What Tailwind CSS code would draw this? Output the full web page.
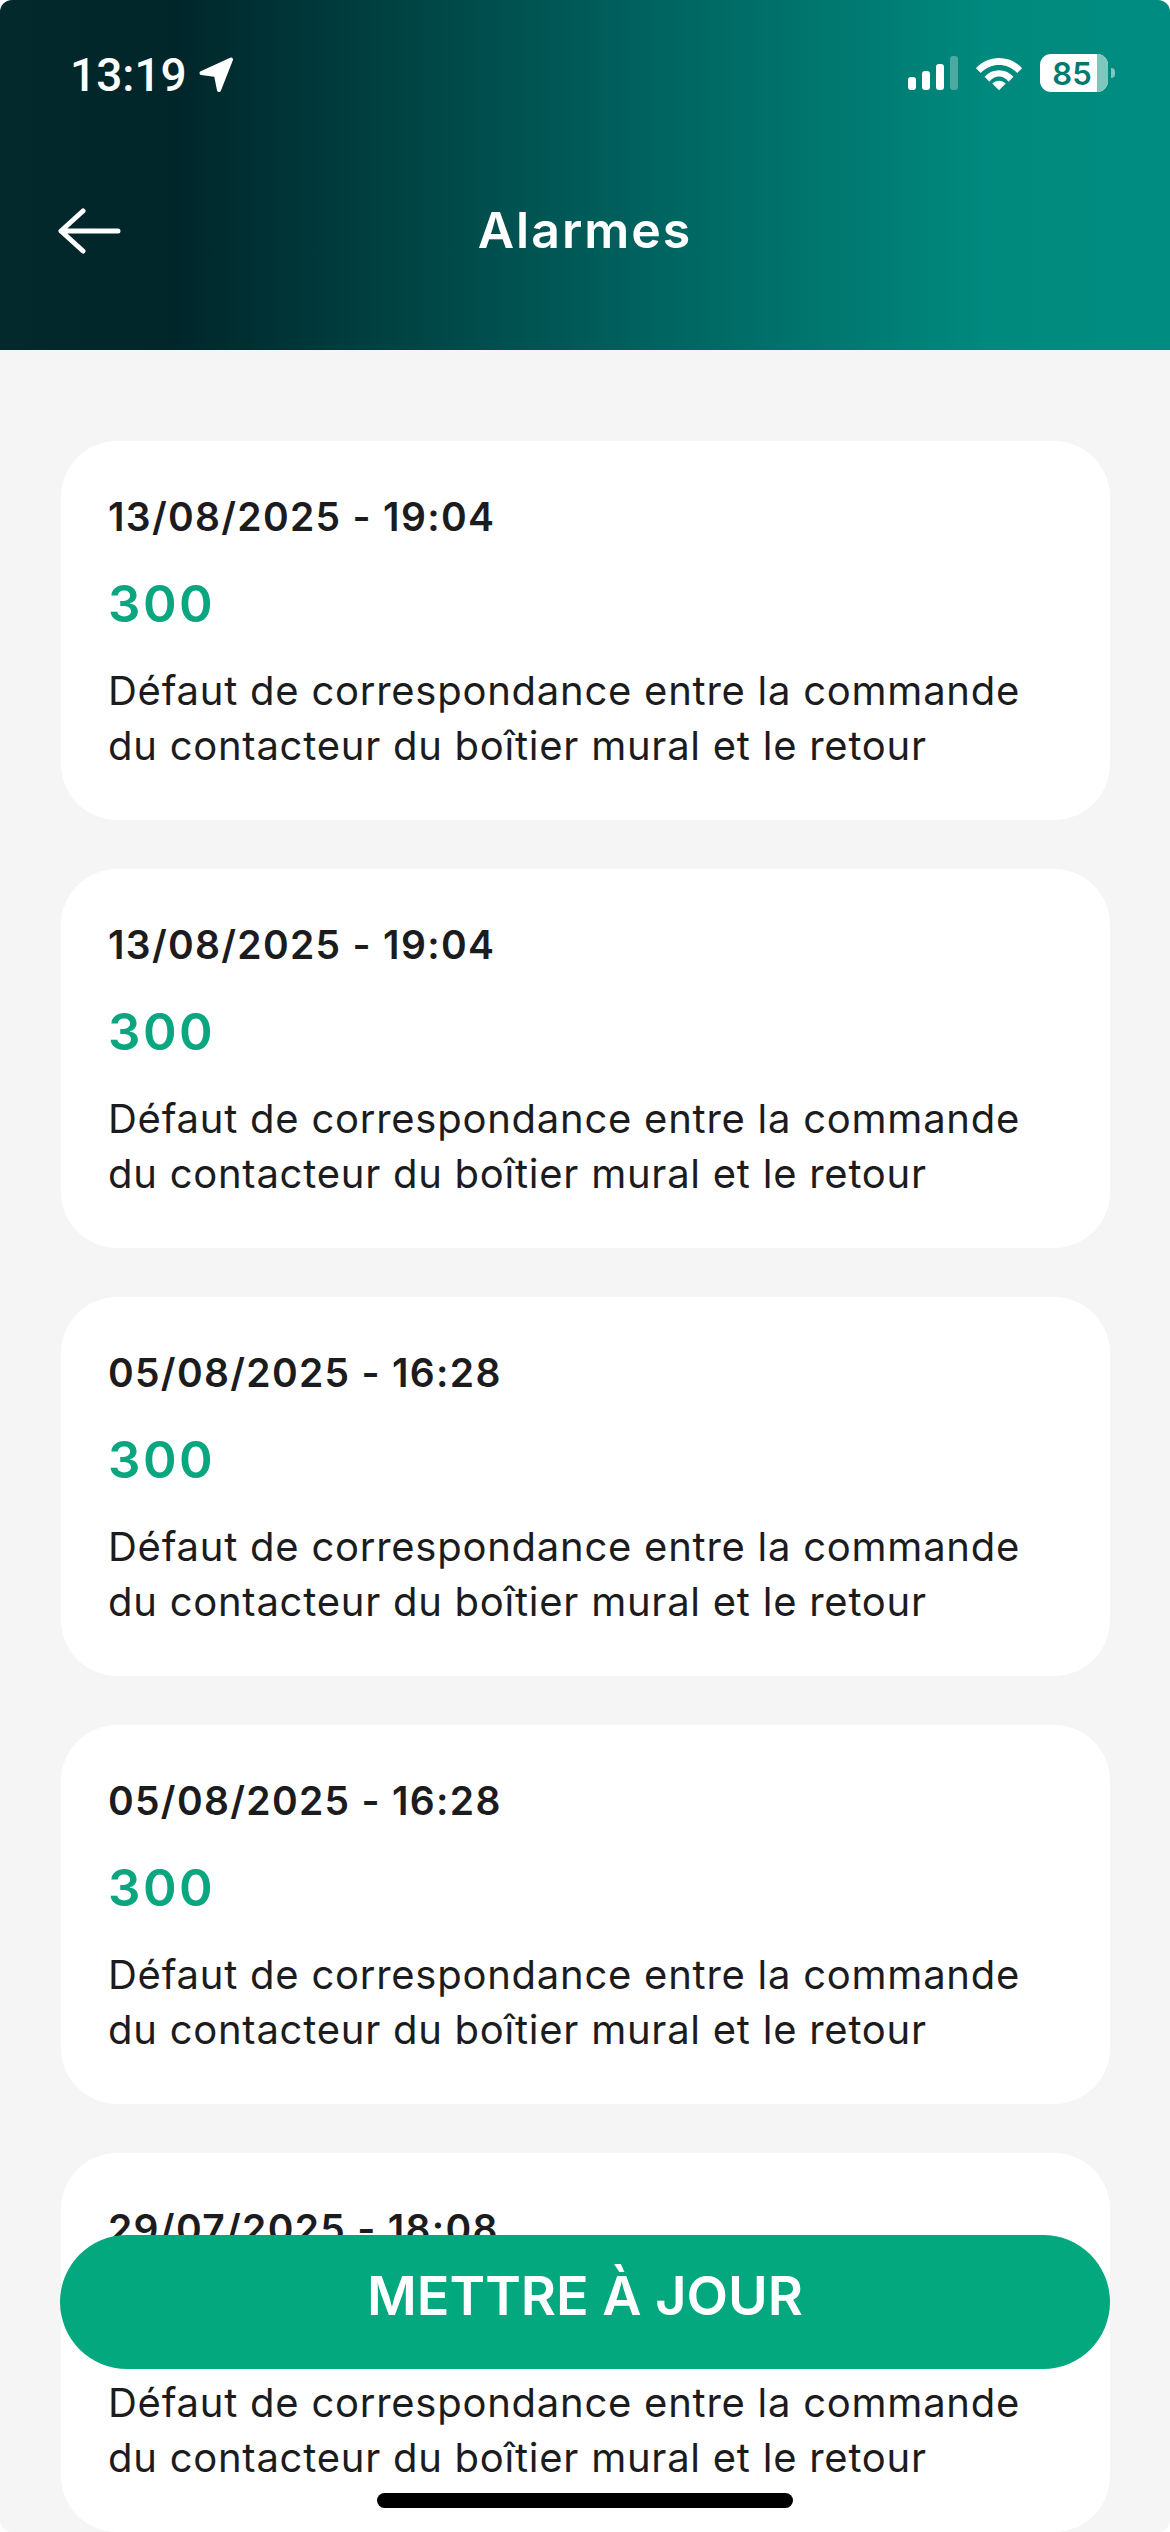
<!DOCTYPE html>
<html lang="fr">
<head>
  <meta charset="UTF-8" />
  <meta name="viewport" content="width=device-width, initial-scale=1.0"/>
  <title>Alarmes</title>
  <script src="https://cdn.jsdelivr.net/npm/@tailwindcss/browser@4"></script>
</head>
<body class="bg-white font-['Inter',sans-serif] text-[#1c1c1e]">
<div class="relative w-[1170px] h-[2532px] overflow-hidden rounded-[12px] bg-[#f5f5f5]">

  <header class="h-[350px] flex flex-col text-white bg-[linear-gradient(90deg,#03292d_0%,#00262a_15%,#005e5b_52%,#008a7e_85%,#008c80_100%)]">
    <div class="flex items-center justify-between h-[150px] pl-[70px] pr-[55px]">
      <div class="flex items-center gap-[12px]">
        <span class="text-[46px] font-medium font-['Roboto',sans-serif]">13:19</span>
        <svg class="w-[36px] h-[36px]" viewBox="0 0 36 36"><path d="M2.5 16 L32 2.5 L20 33 L17 18 Z" fill="#fff" stroke="#fff" stroke-width="4" stroke-linejoin="round"/></svg>
      </div>
      <div class="flex items-center gap-[17px] -mt-[4px]">
        <div class="flex items-end gap-[5.5px] h-[34px]">
          <span class="w-[8.5px] h-[13px] rounded-[3px] bg-white"></span>
          <span class="w-[8.5px] h-[19px] rounded-[3px] bg-white"></span>
          <span class="w-[8.5px] h-[26px] rounded-[3px] bg-white"></span>
          <span class="w-[8.5px] h-[34px] rounded-[3px] bg-white/30"></span>
        </div>
        <svg class="w-[48px] h-[36px]" viewBox="0 0 50 36" fill="#fff"><path d="M1 13 C14 -1 36 -1 49 13 L44 18 C33 7 17 7 6 18Z"/><path d="M10 22 C18 13 32 13 40 22 L35 27 C29 20 21 20 15 27Z"/><path d="M18 29 C22 25 28 25 32 29 L25 36Z"/></svg>
        <div class="flex items-center gap-[3px]">
          <div class="relative w-[68px] h-[38px] rounded-[11px] bg-white overflow-hidden flex items-center justify-center">
            <span class="absolute right-0 top-0 bottom-0 w-[11px] bg-[#7fc6be]"></span>
            <span class="relative -left-[2px] text-[#00796f] text-[31px] font-semibold leading-none">85</span>
          </div>
          <span class="w-[4px] h-[10px] rounded-r-full bg-white/50"></span>
        </div>
      </div>
    </div>
    <div class="relative h-[160px] flex items-center justify-center">
      <svg class="absolute left-[58px] top-[57px] w-[64px] h-[48px]" viewBox="0 0 64 48" fill="none" stroke="#fff" stroke-width="5" stroke-linecap="round" stroke-linejoin="round"><path d="M3 24H60M25 4L3 24L25 44"/></svg>
      <h1 class="text-[50px] font-semibold tracking-[2px]">Alarmes</h1>
    </div>
  </header>

  <main class="flex flex-col gap-[49px] pl-[61px] pr-[60px] pt-[91px]">
    <article class="h-[379px] shrink-0 rounded-[56px] bg-white pl-[47px] pr-[60px] pt-[52px]">
      <p class="text-[39px] leading-[48px] font-semibold tracking-[1.3px]">13/08/2025 - 19:04</p>
      <p class="mt-[32px] text-[51px] leading-[62px] font-semibold tracking-[2.5px] text-[#0aa680]">300</p>
      <p class="mt-[28px] text-[40px] leading-[55px] tracking-[0.75px]">Défaut de correspondance entre la commande du contacteur du boîtier mural et le retour</p>
    </article>
    <article class="h-[379px] shrink-0 rounded-[56px] bg-white pl-[47px] pr-[60px] pt-[52px]">
      <p class="text-[39px] leading-[48px] font-semibold tracking-[1.3px]">13/08/2025 - 19:04</p>
      <p class="mt-[32px] text-[51px] leading-[62px] font-semibold tracking-[2.5px] text-[#0aa680]">300</p>
      <p class="mt-[28px] text-[40px] leading-[55px] tracking-[0.75px]">Défaut de correspondance entre la commande du contacteur du boîtier mural et le retour</p>
    </article>
    <article class="h-[379px] shrink-0 rounded-[56px] bg-white pl-[47px] pr-[60px] pt-[52px]">
      <p class="text-[39px] leading-[48px] font-semibold tracking-[1.3px]">05/08/2025 - 16:28</p>
      <p class="mt-[32px] text-[51px] leading-[62px] font-semibold tracking-[2.5px] text-[#0aa680]">300</p>
      <p class="mt-[28px] text-[40px] leading-[55px] tracking-[0.75px]">Défaut de correspondance entre la commande du contacteur du boîtier mural et le retour</p>
    </article>
    <article class="h-[379px] shrink-0 rounded-[56px] bg-white pl-[47px] pr-[60px] pt-[52px]">
      <p class="text-[39px] leading-[48px] font-semibold tracking-[1.3px]">05/08/2025 - 16:28</p>
      <p class="mt-[32px] text-[51px] leading-[62px] font-semibold tracking-[2.5px] text-[#0aa680]">300</p>
      <p class="mt-[28px] text-[40px] leading-[55px] tracking-[0.75px]">Défaut de correspondance entre la commande du contacteur du boîtier mural et le retour</p>
    </article>
    <article class="h-[379px] shrink-0 rounded-[56px] bg-white pl-[47px] pr-[60px] pt-[52px]">
      <p class="text-[39px] leading-[48px] font-semibold tracking-[1.3px]">29/07/2025 - 18:08</p>
      <p class="mt-[32px] text-[51px] leading-[62px] font-semibold tracking-[2.5px] text-[#0aa680]">300</p>
      <p class="mt-[28px] text-[40px] leading-[55px] tracking-[0.75px]">Défaut de correspondance entre la commande du contacteur du boîtier mural et le retour</p>
    </article>
  </main>

  <button class="absolute left-[60px] top-[2235px] w-[1050px] h-[134px] pb-[14px] rounded-[67px] bg-[#03a87e] text-white text-[54px] font-semibold">METTRE À JOUR</button>
  <div class="absolute left-[377px] top-[2493px] w-[416px] h-[15px] rounded-full bg-black"></div>
</div>
</body>
</html>
